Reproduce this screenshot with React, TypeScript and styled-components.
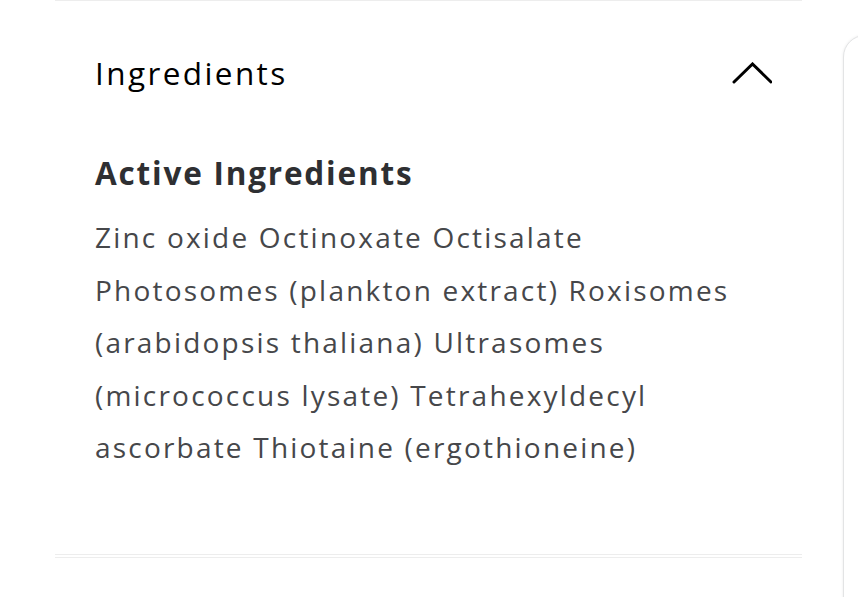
import React from "react";
import styled, { createGlobalStyle } from "styled-components";

const Global = createGlobalStyle`
  html, body { margin: 0; padding: 0; background: #ffffff; }
  body { font-family: "Open Sans", Lato, sans-serif; -webkit-font-smoothing: antialiased; }
`;

const Page = styled.div`
  display: flex;
  align-items: flex-start;
  width: 858px;
  height: 597px;
  overflow: hidden;
`;

const Column = styled.div`
  margin-left: 55px;
  width: 747px;
  flex-shrink: 0;
`;

const Section = styled.section`
  border-top: 1px solid #ededed;
  border-bottom: 1px solid #ededed;
`;

const NextSection = styled.div`
  margin-top: 2px;
  border-top: 1px solid #ededed;
  height: 40px;
`;

const Header = styled.button`
  display: flex;
  width: 100%;
  align-items: center;
  justify-content: space-between;
  height: 143px;
  padding: 0 30px 0 40px;
  border: 0;
  background: transparent;
  cursor: pointer;
  font-family: inherit;
  text-align: left;
`;

const Title = styled.h2`
  margin: 0;
  font-size: 31.5px;
  font-weight: 400;
  letter-spacing: 2.4px;
  color: #000000;
`;

const Body = styled.div`
  padding: 3px 40px 80px 40px;
`;

const SubTitle = styled.h3`
  margin: 0 0 12px 0;
  font-size: 31.5px;
  line-height: 52px;
  font-weight: 700;
  letter-spacing: 1.8px;
  color: #2e2f32;
`;

const Text = styled.p`
  margin: 0;
  max-width: 660px;
  font-size: 28px;
  line-height: 52.5px;
  letter-spacing: 2.2px;
  color: #46474a;
`;

const SideCard = styled.aside`
  margin-left: 41px;
  margin-top: 35px;
  width: 200px;
  height: 700px;
  flex-shrink: 0;
  border: 1px solid #e3e4e5;
  border-radius: 22px 0 0 0;
  box-shadow: 0 0 3px rgba(0, 0, 0, 0.08);
  background: #ffffff;
`;

const ChevronUp = () => (
  <svg width="41" height="22" viewBox="0 0 41 22" fill="none">
    <path d="M3 20 L21.5 2 L40 20" stroke="#000" strokeWidth="3" strokeLinecap="round" strokeLinejoin="miter" />
  </svg>
);

export default function App() {
  return (
    <>
      <Global />
      <Page>
        <Column>
          <Section>
            <Header>
              <Title>Ingredients</Title>
              <ChevronUp />
            </Header>
            <Body>
              <SubTitle>Active Ingredients</SubTitle>
              <Text>
                Zinc oxide Octinoxate Octisalate Photosomes (plankton extract) Roxisomes (arabidopsis thaliana)
                Ultrasomes (micrococcus lysate) Tetrahexyldecyl ascorbate Thiotaine (ergothioneine)
              </Text>
            </Body>
          </Section>
          <NextSection />
        </Column>
        <SideCard />
      </Page>
    </>
  );
}
